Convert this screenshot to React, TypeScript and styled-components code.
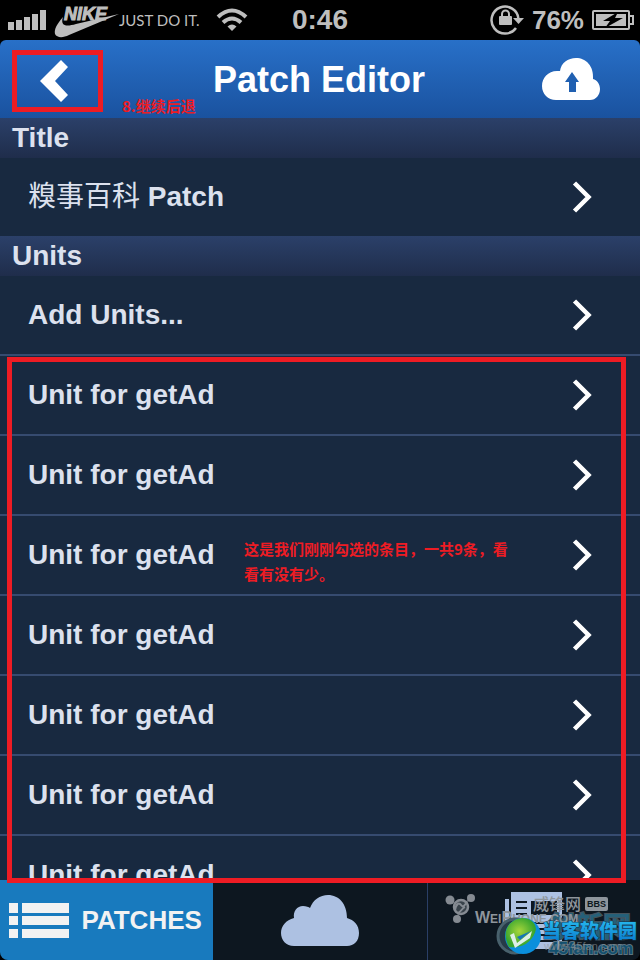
import React from "react";
import styled, { createGlobalStyle } from "styled-components";

const GlobalStyle = createGlobalStyle`
  *, *::before, *::after { box-sizing: border-box; }
  html, body { margin: 0; padding: 0; background: #000; }
  body { font-family: "Liberation Sans", "Noto Sans CJK SC", sans-serif; font-weight: 700; }
  button { font: inherit; color: inherit; border: 0; margin: 0; padding: 0; background: none; cursor: pointer; }
  ul { list-style: none; margin: 0; padding: 0; }
  svg { display: block; flex: none; }
`;

const Screen = styled.div`
  display: flex;
  flex-direction: column;
  height: 100vh;
  overflow: hidden;
  background: #000;
`;

const StatusBar = styled.div`
  display: grid;
  grid-template-columns: 1fr auto 1fr;
  align-items: center;
  height: 40px;
  flex: none;
  padding: 0 6px 2px 8px;
  color: #bebebe;
`;

const StatusGroup = styled.div<{ $end?: boolean }>`
  display: flex;
  align-items: center;
  justify-content: ${(p) => (p.$end ? "flex-end" : "flex-start")};
  gap: 8px;
`;

const Carrier = styled.div`
  display: flex;
  align-items: center;
  margin-right: 8px;
`;

const Slogan = styled.span`
  font: 400 15px/20px "Lato", sans-serif;
  white-space: nowrap;
`;

const Clock = styled.time`
  font-size: 28px;
  line-height: 40px;
  padding-right: 2px;
`;

const Charge = styled.span`
  font-size: 26px;
  line-height: 40px;
`;

const NavBar = styled.header`
  position: relative;
  display: grid;
  grid-template-columns: 1fr auto 1fr;
  align-items: center;
  height: 78px;
  flex: none;
  padding: 4px 40px 0 12px;
  border-radius: 6px 6px 0 0;
  background: linear-gradient(#2870c8, #1a529f);
  color: #fff;
`;

const NavTitle = styled.h1`
  margin: 0;
  font-size: 36px;
  line-height: 38px;
  padding: 0 0 2px 26px;
  white-space: nowrap;
`;

const BackButton = styled.button`
  && {
    display: flex;
    align-items: center;
    width: 91px;
    height: 62px;
    padding-left: 23px;
    border: 5px solid #ed1c24;
  }
`;

const UploadButton = styled.button`
  && {
    justify-self: end;
    padding-bottom: 4px;
  }
`;

const Note = styled.span`
  position: absolute;
  color: #ed1c24;
  font-family: "Noto Sans CJK SC", sans-serif;
`;

const BackNote = styled(Note)`
  left: 122px;
  bottom: 1px;
  font-size: 15px;
  line-height: 22px;
  white-space: nowrap;
`;

const UnitsNote = styled(Note)`
  left: 244px;
  top: 180px;
  width: 270px;
  font-size: 15px;
  line-height: 25px;
`;

const Content = styled.main`
  display: flex;
  flex-direction: column;
  flex: 1;
  min-height: 0;
  background: #182940;
  color: #dce1ee;
`;

const SectionTitle = styled.h2`
  margin: 0;
  height: 40px;
  flex: none;
  padding-left: 12px;
  font-size: 28px;
  line-height: 40px;
  background: linear-gradient(#2b4069, #1f2d4b);
`;

const Row = styled.button<{ $divided?: boolean }>`
  && {
    display: flex;
    align-items: center;
    justify-content: space-between;
    flex: none;
    width: 100%;
    height: ${(p) => (p.$divided ? 80 : 78)}px;
    padding: 0 48px 0 28px;
    border-bottom: ${(p) => (p.$divided ? "2px solid #364b70" : "0")};
    font-size: 28px;
    line-height: 32px;
    text-align: left;
  }
`;

const Light = styled.span`
  font-weight: 400;
`;

const UnitsArea = styled.div`
  position: relative;
  flex: 1;
  min-height: 0;
`;

const UnitList = styled.ul`
  height: 100%;
  overflow: hidden;
`;

const Marker = styled.div`
  position: absolute;
  z-index: 1;
  inset: 1px 14px -3px 7px;
  border: 5px solid #ed1c24;
  pointer-events: none;
`;

const TabBar = styled.nav`
  position: relative;
  display: grid;
  grid-template-columns: repeat(3, 1fr);
  height: 80px;
  flex: none;
  overflow: hidden;
  border-radius: 0 0 8px 8px;
  background: #0d1720;
`;

const Tab = styled.button<{ $active?: boolean; $ruled?: boolean }>`
  && {
    display: flex;
    align-items: center;
    justify-content: center;
    gap: 12px;
    padding-right: ${(p) => (p.$active ? 2 : 0)}px;
    color: #f2f2f2;
    font-size: 26px;
    line-height: 30px;
    background: ${(p) => (p.$active ? "#187abe" : "transparent")};
    border-left: ${(p) => (p.$ruled ? "1px solid #2a3f66" : "0")};
  }
`;

const Watermark = styled.svg`
  position: absolute;
  right: 0;
  bottom: 0;
  pointer-events: none;
`;

const Signal = () => (
  <svg width="38" height="20" viewBox="0 0 38 20" fill="#bebebe" aria-hidden="true">
    <path d="M0 12h6v8H0zM8 10h6v10H8zM16 7h6v13h-6zM24 4h6v16h-6zM32 0h6v20h-6z" />
  </svg>
);

const NikeLogo = () => (
  <svg width="65" height="36" viewBox="0 0 65 36" fill="#bebebe" role="img" aria-label="Nike">
    <path d="M9 15C3 22 0 27 1 32c2 4 8 4 14 1L65 12 22 22C12 25 6 24 9 15z" />
    <text x="10" y="18" fontFamily="Liberation Sans, sans-serif" fontSize="18" fontWeight="700" fontStyle="italic" stroke="#bebebe" strokeWidth="1">NIKE</text>
  </svg>
);

const Wifi = () => (
  <svg width="32" height="24" viewBox="0 0 32 24" fill="none" stroke="#bebebe" aria-hidden="true">
    <path d="M2 9Q16-4 30 9" strokeWidth="4" />
    <path d="M7 14.500q9-8 18 0" strokeWidth="4" />
    <path d="M11.500 18.500q4.500-4 9 0L16 23z" fill="#bebebe" stroke="none" />
  </svg>
);

const RotationLock = () => (
  <svg width="34" height="32" viewBox="0 0 34 32" fill="none" stroke="#bebebe" strokeWidth="2.500" aria-hidden="true">
    <path d="M26 24A13.500 13.500 0 1 1 28.500 15" />
    <path d="M23 14h11l-5.500 6z" fill="#bebebe" stroke="none" />
    <path d="M12 13v-3a3.500 3.500 0 0 1 7 0v3" strokeWidth="2" />
    <rect x="9" y="12" width="13" height="9" rx="1" fill="#bebebe" stroke="none" />
  </svg>
);

const Battery = () => (
  <svg width="42" height="20" viewBox="0 0 42 20" aria-hidden="true">
    <rect x="1" y="1" width="36" height="18" rx="1" fill="none" stroke="#bebebe" strokeWidth="2" />
    <path d="M38 6h3v8h-3" fill="none" stroke="#bebebe" strokeWidth="2" />
    <path d="M4 4h30v12H4z" fill="#bebebe" />
    <path d="M26 2 11 11h7l-5 7 18-10h-8z" fill="#000" />
  </svg>
);

const BackArrow = () => (
  <svg width="28" height="42" viewBox="0 0 28 42" fill="#fff" aria-hidden="true">
    <path d="M21 0 0 21l21 21 7-7-13-14L28 7z" />
  </svg>
);

const CloudUpload = () => (
  <svg width="58" height="42" viewBox="0 0 58 42" aria-hidden="true">
    <path d="M14 42C6 42 0 36 0 28s6-15 15-15h3C19 5 26 0 34 0c10 0 18 8 17 21 4 1 7 5 7 10 0 6-4 11-10 11z" fill="#fff" />
    <path d="m30 14-7 10h4v10h7V24h3z" fill="#2060b1" />
  </svg>
);

const Chevron = () => (
  <svg width="20" height="32" viewBox="0 0 20 32" fill="none" stroke="#fff" strokeWidth="4.500" aria-hidden="true">
    <path d="m2.500 2 14 14-14 14" />
  </svg>
);

const ListIcon = () => (
  <svg width="60" height="35" viewBox="0 0 60 35" fill="#f2f2f2" aria-hidden="true">
    <path d="M0 0h9v10H0zM13 0h47v10H13zM0 13h9v9H0zM13 13h47v9H13zM0 26h9v9H0zM13 26h47v9H13z" />
  </svg>
);

const CloudIcon = () => (
  <svg width="78" height="51" viewBox="0 0 78 51" fill="#adc1e2" aria-hidden="true">
    <path d="M13 51C5 51 0 45 0 38c0-7 5-13 13-15-1-7 3-12 9-12 3 0 6 1 7 2C32 5 39 0 47 0c11 0 19 9 19 23 7 2 12 7 12 15 0 8-5 13-12 13z" />
  </svg>
);

const NewsIcon = () => (
  <svg width="57" height="57" viewBox="0 0 57 57" aria-hidden="true">
    <path d="M6 0h51v57H5c-3 0-5-3-5-6V7h4v43h2z" fill="#adc1e2" />
    <path d="M11 9h11v2H11zM11 15h11v2H11zM11 21h11v2H11zM26 9h26v14H26zM11 30h41v2H11zM11 36h41v2H11zM11 42h41v2H11zM11 48h41v2H11z" fill="#0d1720" />
  </svg>
);

const SiteMarks = () => (
  <Watermark width="200" height="70" viewBox="0 0 200 70" role="img" aria-label="WeiPhone, 当客软件园">
    <defs>
      <linearGradient id="cyan" x1="0" y1="0" x2="0" y2="1">
        <stop offset="0" stopColor="#2cc4f4" />
        <stop offset="1" stopColor="#0878cc" />
      </linearGradient>
      <radialGradient id="leaf" cx="45%" cy="45%">
        <stop offset="0" stopColor="#a6d63c" />
        <stop offset="1" stopColor="#38a52e" />
      </radialGradient>
    </defs>
    <g fill="#858b92">
      <path d="m10 10 11 7 10-9M21 17l-4 12" fill="none" stroke="#50585f" strokeWidth="2" />
      <circle cx="10" cy="10" r="4.500" />
      <circle cx="31" cy="8" r="4" />
      <circle cx="17" cy="29" r="4" />
      <circle cx="21" cy="17" r="7" fill="#38424a" stroke="#858b92" strokeWidth="2.500" />
      <path d="M15 20c1-6 4-8 6-5s4 0 6-3M18 23c3-1 4-5 7-6" fill="none" stroke="#858b92" strokeWidth="2" />
    </g>
    <text x="107" y="47" fill="#256079" stroke="#46535c" strokeWidth="2" paintOrder="stroke" fontFamily="Noto Sans CJK SC, sans-serif" fontSize="28" fontWeight="700">创新网</text>
    <g fill="#8e959c" fontFamily="Liberation Sans, Noto Sans CJK SC, sans-serif" fontWeight="700">
      <text x="93" y="20" fontSize="16" fontFamily="Noto Sans CJK SC, sans-serif" fontWeight="500">威锋网</text>
      <rect x="145" y="7" width="23" height="14" rx="2" />
      <text x="147" y="17" fontSize="9" fill="#0d1720">BBS</text>
      <text x="35" y="33" fontSize="16">W<tspan fontSize="12">EI</tspan>P<tspan fontSize="12">HONE.COM</tspan></text>
    </g>
    <circle cx="75" cy="46" r="17" fill="#263b48" stroke="#48616c" strokeWidth="3" />
    <circle cx="83" cy="46" r="18" fill="#0a8fdc" />
    <path d="M69 57C61 42 68 30 82 28c8 0 13 4 14 11-2 10-11 20-27 18z" fill="url(#leaf)" />
    <path d="m70 45 4-2 3 10 15-12-2 7-15 10z" fill="#dcefe8" />
    <path d="m77 47 14-6-11 9z" fill="#1676b8" />
    <text x="109" y="64" fontFamily="Liberation Sans, sans-serif" fontSize="17" fontWeight="700" fill="#12506f" stroke="#5b7380" strokeWidth="2" paintOrder="stroke">45fan.com</text>
    <text x="104" y="60" fontFamily="Liberation Sans, sans-serif" fontSize="11" fontWeight="400" fill="#8d989f" fillOpacity="0.600">www.45fan.com</text>
    <text x="102" y="48" fontFamily="Noto Sans CJK SC, sans-serif" fontSize="19" fontWeight="900" fill="url(#cyan)" stroke="#10354c" strokeWidth="1" paintOrder="stroke">当客软件园</text>
  </Watermark>
);

const units = Array.from({ length: 7 }, (_, i) => ({ id: i, name: "Unit for getAd" }));

export default function App() {
  return (
    <>
      <GlobalStyle />
      <Screen>
        <StatusBar>
          <StatusGroup>
            <Signal />
            <Carrier>
              <NikeLogo />
              <Slogan>JUST DO IT.</Slogan>
            </Carrier>
            <Wifi />
          </StatusGroup>
          <Clock>0:46</Clock>
          <StatusGroup $end>
            <RotationLock />
            <Charge>76%</Charge>
            <Battery />
          </StatusGroup>
        </StatusBar>
        <NavBar>
          <BackButton aria-label="Back"><BackArrow /></BackButton>
          <NavTitle>Patch Editor</NavTitle>
          <UploadButton aria-label="Upload"><CloudUpload /></UploadButton>
          <BackNote>8.继续后退</BackNote>
        </NavBar>
        <Content>
          <SectionTitle>Title</SectionTitle>
          <Row><span><Light>糗事百科</Light> Patch</span><Chevron /></Row>
          <SectionTitle>Units</SectionTitle>
          <Row $divided>Add Units...<Chevron /></Row>
          <UnitsArea>
            <UnitList>
              {units.map((unit) => (
                <li key={unit.id}>
                  <Row $divided>{unit.name}<Chevron /></Row>
                </li>
              ))}
            </UnitList>
            <Marker />
            <UnitsNote>这是我们刚刚勾选的条目，一共9条，看看有没有少。</UnitsNote>
          </UnitsArea>
        </Content>
        <TabBar>
          <Tab $active><ListIcon />PATCHES</Tab>
          <Tab aria-label="Cloud"><CloudIcon /></Tab>
          <Tab $ruled aria-label="News"><NewsIcon /></Tab>
          <SiteMarks />
        </TabBar>
      </Screen>
    </>
  );
}
